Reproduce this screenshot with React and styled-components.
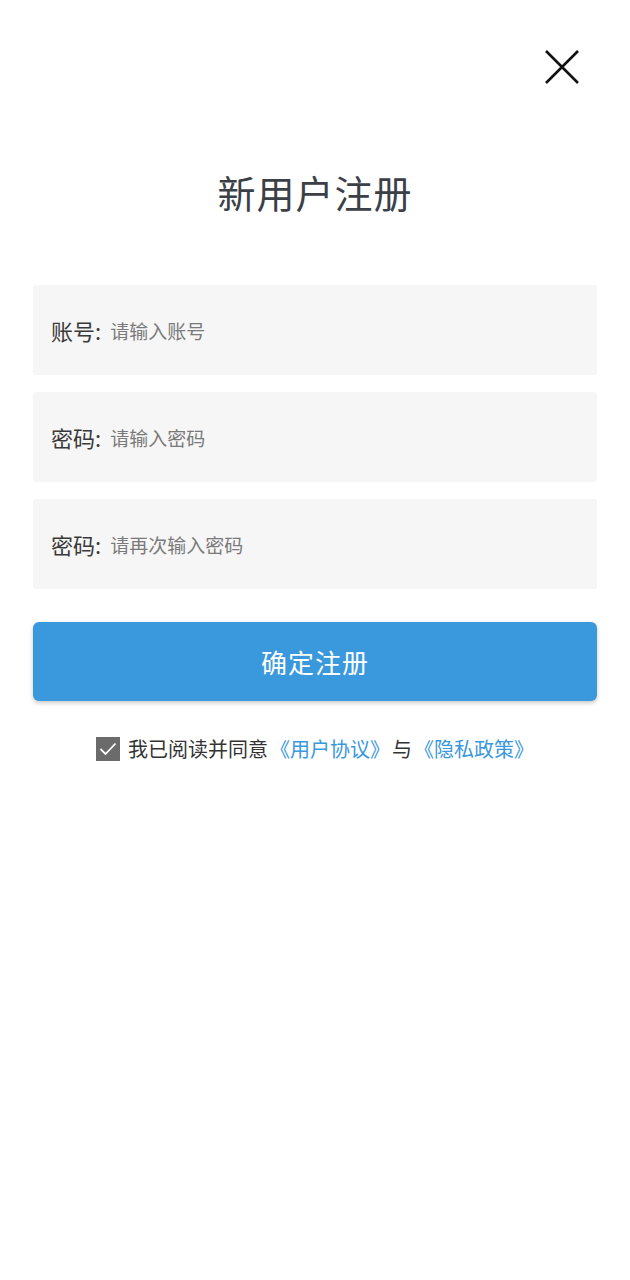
import React from 'react';
import styled, { createGlobalStyle } from 'styled-components';

const GlobalStyle = createGlobalStyle`
  body {
    margin: 0;
    background: #ffffff;
    font-family: "Noto Sans CJK SC", "Noto Sans", sans-serif;
  }
`;

const fields = [
  { label: '账号:', placeholder: '请输入账号' },
  { label: '密码:', placeholder: '请输入密码' },
  { label: '密码:', placeholder: '请再次输入密码' },
];

export default function App() {
  return (
    <Page>
      <GlobalStyle />
      <TopBar>
        <CloseButton aria-label="关闭">
          <svg width="36" height="36" viewBox="0 0 36 36">
            <path d="M2 2 L34 34 M34 2 L2 34" stroke="#111" strokeWidth="2.6" fill="none" />
          </svg>
        </CloseButton>
      </TopBar>
      <Title>新用户注册</Title>
      <Form>
        {fields.map((f, i) => (
          <Field key={i}>
            <Label>{f.label}</Label>
            <Input placeholder={f.placeholder} type={i === 0 ? 'text' : 'password'} />
          </Field>
        ))}
        <SubmitButton>确定注册</SubmitButton>
      </Form>
      <Agreement>
        <CheckBox>
          <svg width="18" height="14" viewBox="0 0 18 14">
            <path d="M1.5 7 L6.5 12 L16.5 1.5" stroke="#fff" strokeWidth="1.8" fill="none" />
          </svg>
        </CheckBox>
        <span>我已阅读并同意</span>
        <DocLink>《用户协议》</DocLink>
        <span>与</span>
        <DocLink>《隐私政策》</DocLink>
      </Agreement>
    </Page>
  );
}

const Page = styled.div`
  display: flex;
  flex-direction: column;
  min-height: 1280px;
  padding: 0 33px;
  box-sizing: border-box;
`;

const TopBar = styled.div`
  display: flex;
  justify-content: flex-end;
  padding-top: 49px;
  padding-right: 17px;
`;

const CloseButton = styled.button`
  display: flex;
  border: none;
  background: none;
  padding: 0;
  cursor: pointer;
`;

const Title = styled.h1`
  margin: 81px 0 0;
  text-align: center;
  font-size: 38px;
  font-weight: 400;
  line-height: 52px;
  color: #3b4047;
  letter-spacing: 1px;
`;

const Form = styled.div`
  display: flex;
  flex-direction: column;
  gap: 17px;
  margin-top: 67px;
`;

const Field = styled.label`
  display: flex;
  align-items: center;
  height: 90px;
  padding: 0 18px;
  background: #f6f6f6;
  border-radius: 3px;
`;

const Label = styled.span`
  font-size: 22px;
  color: #3a3a3a;
  margin-right: 9px;
  white-space: nowrap;
`;

const Input = styled.input`
  flex: 1;
  border: none;
  background: transparent;
  outline: none;
  font-family: inherit;
  font-size: 19px;
  color: #333;
  padding: 0;

  &::placeholder {
    color: #7a7a7a;
  }
`;

const SubmitButton = styled.button`
  margin-top: 16px;
  height: 79px;
  border: none;
  border-radius: 6px;
  background: #3a98dd;
  color: #ffffff;
  font-family: inherit;
  font-size: 26px;
  letter-spacing: 1px;
  box-shadow: 0 2px 4px rgba(0, 0, 0, 0.22);
  cursor: pointer;
`;

const Agreement = styled.div`
  display: flex;
  align-items: center;
  justify-content: center;
  gap: 2px;
  margin-top: 33px;
  font-size: 20px;
  color: #333;
`;

const CheckBox = styled.span`
  display: flex;
  align-items: center;
  justify-content: center;
  width: 24px;
  height: 24px;
  background: #6b6b6b;
  margin-right: 6px;
`;

const DocLink = styled.a`
  color: #3a98dd;
  text-decoration: none;
  cursor: pointer;
`;
